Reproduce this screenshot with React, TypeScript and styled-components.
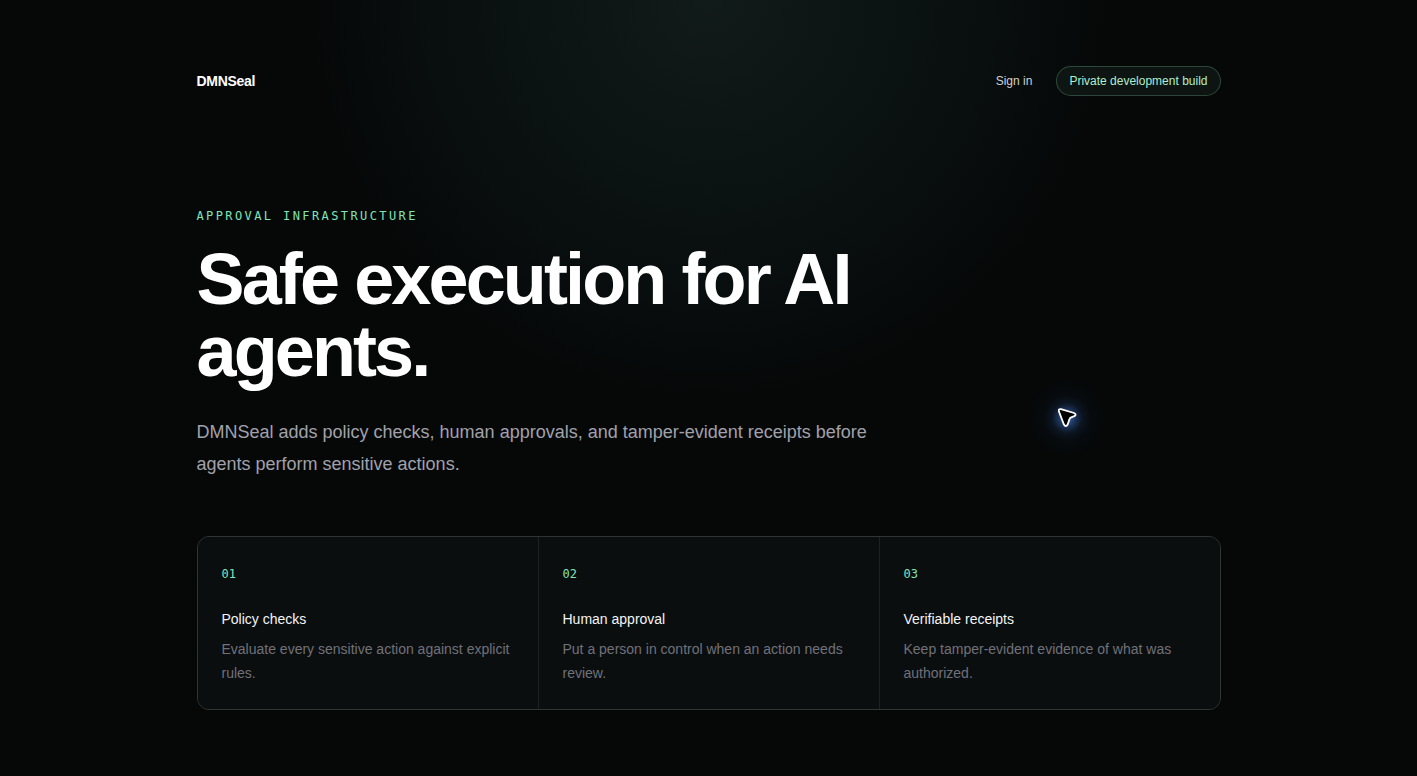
import React from "react";
import styled, { createGlobalStyle } from "styled-components";

const GlobalStyle = createGlobalStyle`
  *, *::before, *::after { box-sizing: border-box; }
  html { background: #060808; }
  body {
    margin: 0;
    color: #fff;
    font-family: "Liberation Sans", Arial, Helvetica, sans-serif;
    -webkit-font-smoothing: antialiased;
  }
  h1, h2, p { margin: 0; }
`;

const Page = styled.main`
  display: flex;
  align-items: center;
  justify-content: center;
  min-height: 100vh;
  padding: 48px 24px;
  background: radial-gradient(circle at top, #111b19 0%, #0b1212 19%, #060808 38%);
`;

const Container = styled.div`
  width: 100%;
  max-width: 1024px;
`;

const Header = styled.header`
  display: flex;
  align-items: center;
  justify-content: space-between;
  margin-bottom: 112px;
`;

const Brand = styled.span`
  font-size: 14px;
  line-height: 20px;
  font-weight: 700;
  letter-spacing: -0.02em;
`;

const Nav = styled.nav`
  display: flex;
  align-items: center;
  gap: 24px;
  font-size: 12px;
  line-height: 16px;
`;

const SignIn = styled.a`
  color: #d0d1d4;
  text-decoration: none;
`;

const Badge = styled.span`
  padding: 6px 12px;
  border: 1px solid rgba(134, 226, 178, 0.25);
  border-radius: 999px;
  background: rgba(134, 226, 178, 0.06);
  color: #b1edcf;
`;

const Hero = styled.section`
  max-width: 768px;
`;

const Mono = styled.p`
  color: #82e3b6;
  font-family: "DejaVu Sans Mono", Menlo, monospace;
  font-size: 12px;
`;

const Eyebrow = styled(Mono)`
  line-height: 16px;
  letter-spacing: 0.2em;
  text-transform: uppercase;
`;

const Title = styled.h1`
  margin-top: 19px;
  font-size: 72px;
  line-height: 72px;
  font-weight: 700;
  letter-spacing: -0.04em;
`;

const Lead = styled.p`
  max-width: 672px;
  margin-top: 29px;
  color: #a1a1aa;
  font-size: 18px;
  line-height: 32px;
`;

const Features = styled.section`
  display: grid;
  grid-template-columns: repeat(3, 1fr);
  gap: 1px;
  margin-top: 56px;
  overflow: hidden;
  border: 1px solid #303433;
  border-radius: 12px;
  background: #1d2121;

  @media (max-width: 720px) {
    grid-template-columns: 1fr;
  }
`;

const Feature = styled.article`
  padding: 24px;
  background: #0a0e0f;
`;

const Index = styled(Mono)`
  line-height: 26px;
`;

const FeatureTitle = styled.h2`
  margin-top: 22px;
  color: #f4f4f5;
  font-size: 14px;
  line-height: 20px;
  font-weight: 400;
`;

const FeatureText = styled.p`
  margin-top: 8px;
  color: #71717a;
  font-size: 14px;
  line-height: 24px;
`;

const Pointer = styled.div`
  position: fixed;
  top: 378px;
  left: 1027px;
  width: 80px;
  height: 80px;
  pointer-events: none;
  background: radial-gradient(
    circle closest-side,
    rgba(80, 145, 246, 0.7) 0%,
    rgba(70, 135, 240, 0.36) 20%,
    rgba(59, 130, 246, 0.1) 38%,
    rgba(59, 130, 246, 0.03) 58%,
    rgba(59, 130, 246, 0) 100%
  );

  svg { display: block; }
`;

const features = [
  {
    index: "01",
    title: "Policy checks",
    text: "Evaluate every sensitive action against explicit rules.",
  },
  {
    index: "02",
    title: "Human approval",
    text: "Put a person in control when an action needs review.",
  },
  {
    index: "03",
    title: "Verifiable receipts",
    text: "Keep tamper-evident evidence of what was authorized.",
  },
];

export default function App() {
  return (
    <>
      <GlobalStyle />
      <Page>
        <Container>
          <Header>
            <Brand>DMNSeal</Brand>
            <Nav>
              <SignIn href="#sign-in">Sign in</SignIn>
              <Badge>Private development build</Badge>
            </Nav>
          </Header>
          <Hero>
            <Eyebrow>Approval infrastructure</Eyebrow>
            <Title>Safe execution for AI agents.</Title>
            <Lead>
              DMNSeal adds policy checks, human approvals, and tamper-evident
              receipts before agents perform sensitive actions.
            </Lead>
          </Hero>
          <Features>
            {features.map((feature) => (
              <Feature key={feature.index}>
                <Index>{feature.index}</Index>
                <FeatureTitle>{feature.title}</FeatureTitle>
                <FeatureText>{feature.text}</FeatureText>
              </Feature>
            ))}
          </Features>
        </Container>
      </Page>
      <Pointer aria-hidden="true">
        <svg width="80" height="80" viewBox="0 0 80 80">
          <path
            d="M34 31.2 L47 35 Q50 36.4 47.4 38.2 L44.2 39.4 Q42.8 40 42.4 41.4 L40.8 46.2 Q38.8 49.8 36.8 46.2 L31.9 33.4 Q31.4 30.6 34 31.2 Z"
            fill="#000"
            stroke="#fff"
            strokeWidth="1.8"
            strokeLinejoin="round"
          />
        </svg>
      </Pointer>
    </>
  );
}
